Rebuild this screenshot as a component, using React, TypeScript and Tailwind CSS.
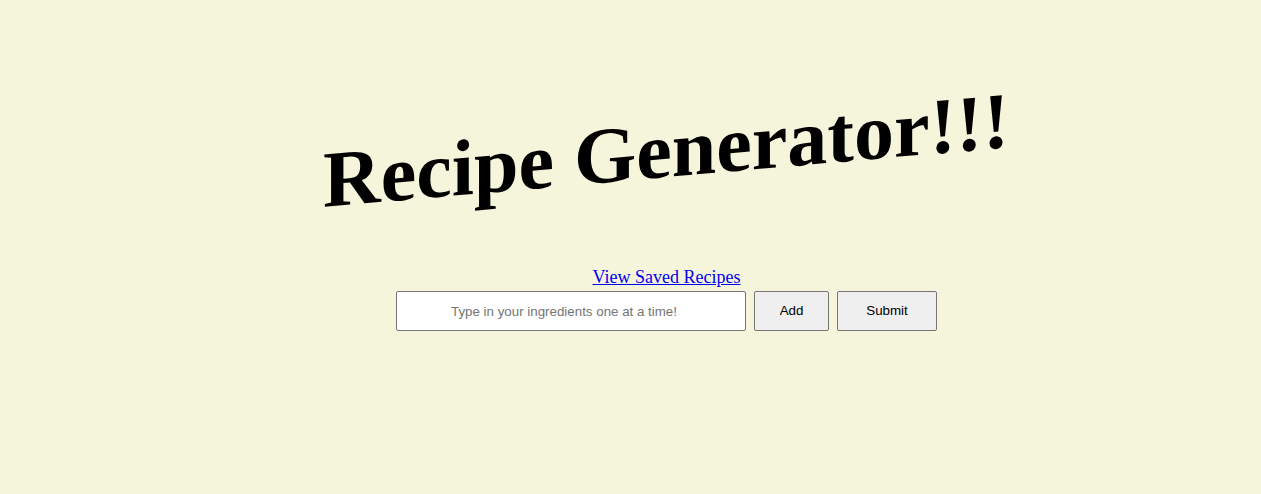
export default function App() {
  return (
    <div className="min-h-[494px] w-full bg-[#f5f5dc] pl-[72px] font-['Liberation_Serif',serif]">
      <div className="flex flex-col items-center pt-[110px]">
        <h1 className="-skew-y-5 text-[80px] font-bold leading-none text-black">
          Recipe Generator!!!
        </h1>
        <a href="#" className="mt-[76px] mb-[3px] text-[18px] leading-[22px] text-[#0000ee] underline">
          View Saved Recipes
        </a>
        <div className="flex gap-2">
          <input
            placeholder="Type in your ingredients one at a time!"
            className="h-10 w-[350px] rounded-[2px] border border-[#767676] bg-white pr-[14px] text-center font-['Liberation_Sans',sans-serif] text-[13.333px] placeholder:text-[#757575]"
          />
          <button className="h-10 w-[75px] rounded-[2px] border border-[#767676] bg-[#efefef] font-['Liberation_Sans',sans-serif] text-[13.333px] text-black">
            Add
          </button>
          <button className="h-10 w-[100px] rounded-[2px] border border-[#767676] bg-[#efefef] font-['Liberation_Sans',sans-serif] text-[13.333px] text-black">
            Submit
          </button>
        </div>
      </div>
    </div>
  );
}
